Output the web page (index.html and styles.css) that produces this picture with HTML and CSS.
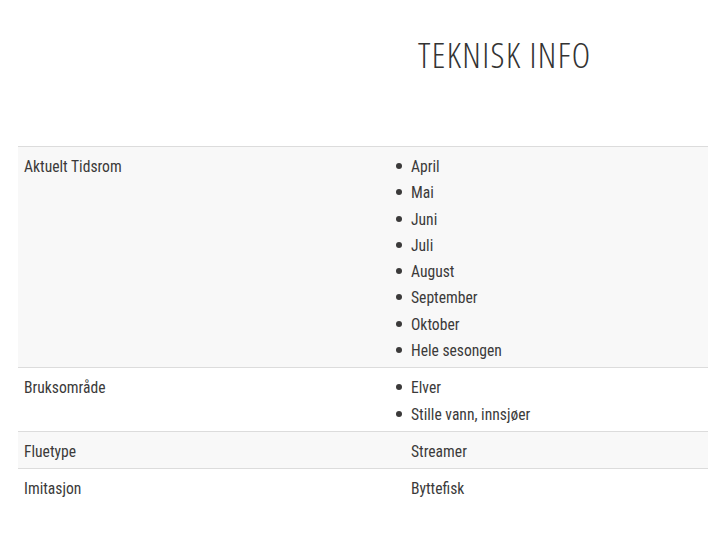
FILE: index.html
```html
<!DOCTYPE html>
<html lang="no">
<head>
<meta charset="utf-8">
<link rel="stylesheet" href="styles.css">
</head>
<body>
<section class="tech">
  <h2 class="tech-title">TEKNISK INFO</h2>
  <table class="specs">
    <tbody>
      <tr class="odd">
        <th>Aktuelt Tidsrom</th>
        <td>
          <ul>
            <li>April</li>
            <li>Mai</li>
            <li>Juni</li>
            <li>Juli</li>
            <li>August</li>
            <li>September</li>
            <li>Oktober</li>
            <li>Hele sesongen</li>
          </ul>
        </td>
      </tr>
      <tr>
        <th>Bruksområde</th>
        <td>
          <ul>
            <li>Elver</li>
            <li>Stille vann, innsjøer</li>
          </ul>
        </td>
      </tr>
      <tr class="odd">
        <th>Fluetype</th>
        <td>Streamer</td>
      </tr>
      <tr>
        <th>Imitasjon</th>
        <td>Byttefisk</td>
      </tr>
    </tbody>
  </table>
</section>
</body>
</html>
```
FILE: styles.css
```css
html, body {
  margin: 0;
  padding: 0;
  background: #fff;
}
body {
  font-family: "Roboto Condensed", "Liberation Sans", sans-serif;
  color: #3b3a3a;
  font-size: 15.6px;
}
.tech {
  padding-left: 18px;
}
.tech-title {
  margin: 0;
  padding: 35px 0 0 400px;
  height: 146px;
  box-sizing: border-box;
  font-family: "Open Sans", "Roboto Condensed", sans-serif;
  font-stretch: 75%;
  font-size: 35px;
  font-weight: 300;
  letter-spacing: 1.4px;
  line-height: 40px;
  color: #333;
}
.specs {
  width: 690px;
  border-collapse: collapse;
  border-spacing: 0;
}
.specs tr {
  border-top: 1px solid #dcdcdc;
}
.specs tr.odd {
  background: #f8f8f8;
}
.specs th,
.specs td {
  text-align: left;
  vertical-align: top;
  font-weight: 400;
  padding: 7px 6px 3px;
  line-height: 26.3px;
}
.specs th {
  width: 375px;
}
.specs ul {
  margin: 0;
  padding: 0;
  list-style: none;
}
.specs li::before {
  content: "";
  display: inline-block;
  width: 6px;
  height: 6px;
  border-radius: 50%;
  background: #3b3a3a;
  margin-left: -15px;
  margin-right: 9px;
  vertical-align: 3px;
}
```
